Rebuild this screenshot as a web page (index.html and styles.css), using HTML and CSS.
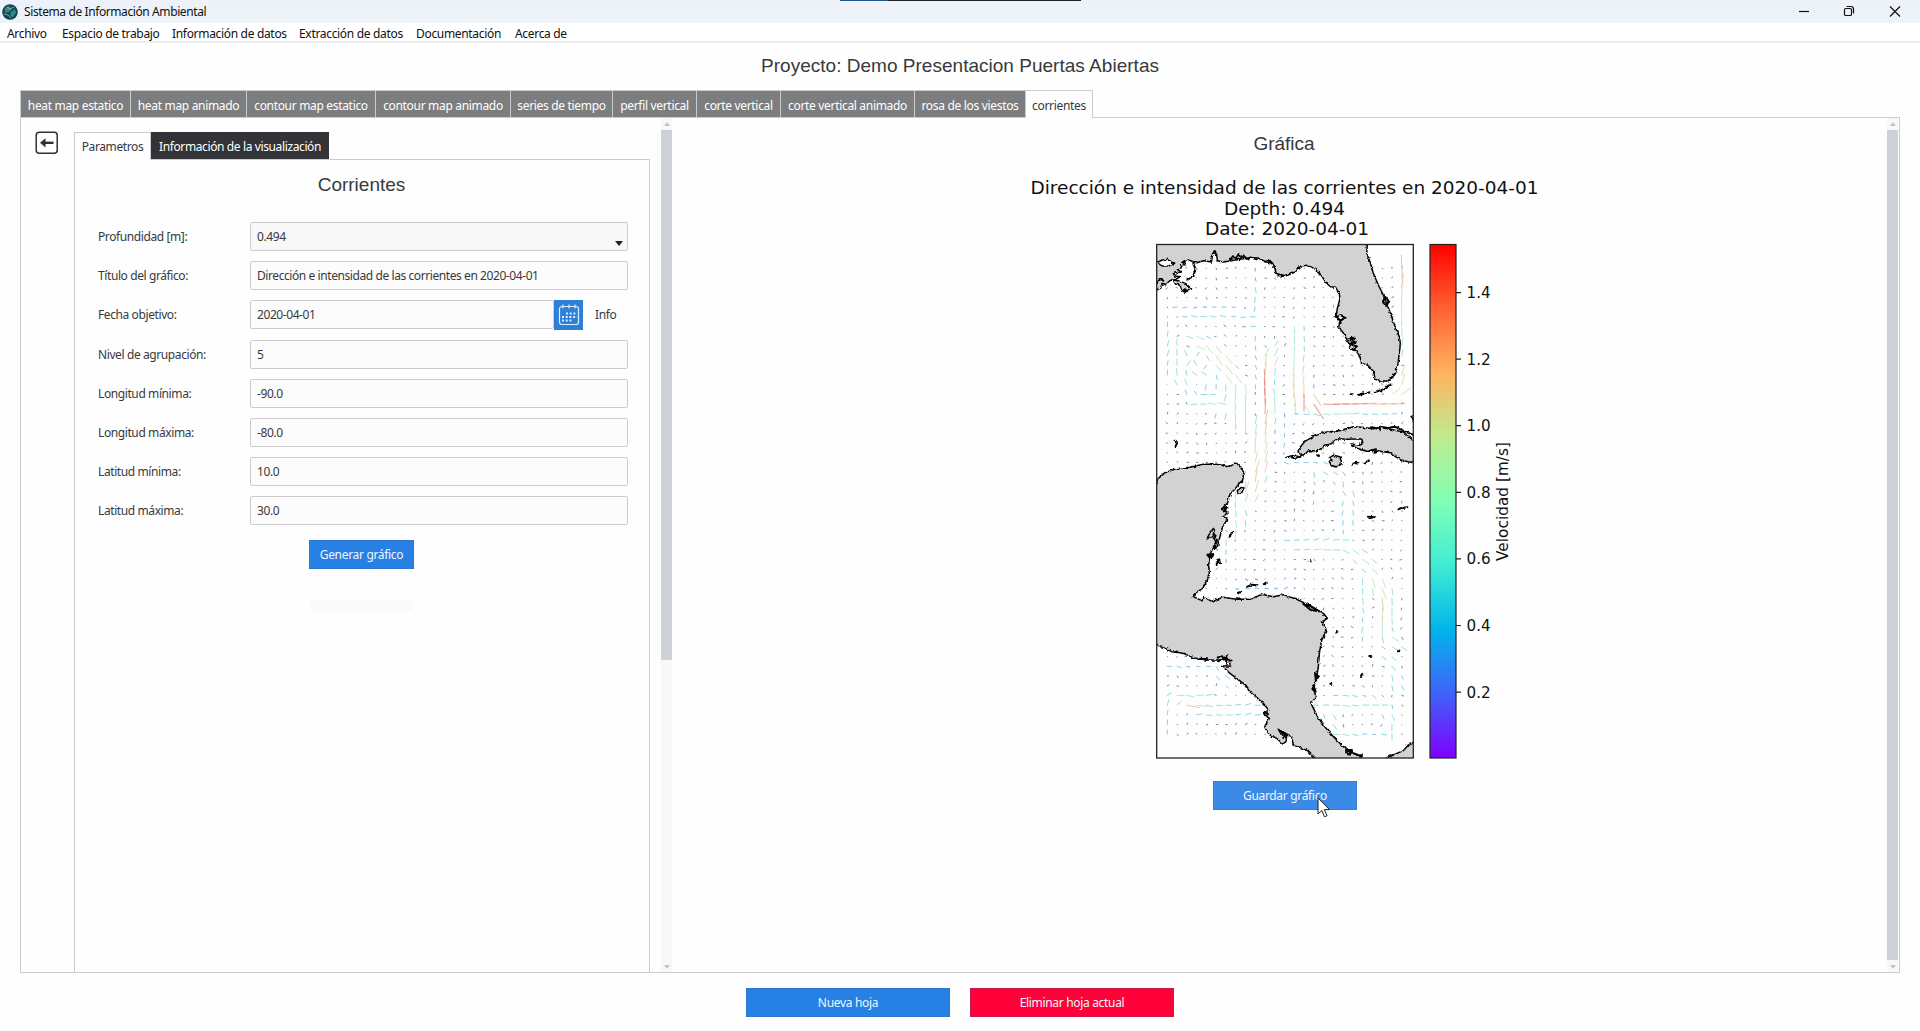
FILE: index.html
```html
<!DOCTYPE html>
<html lang="es">
<head>
<meta charset="utf-8">
<title>Sistema de Información Ambiental</title>
<link rel="stylesheet" href="styles.css">
</head>
<body>
<div class="topstrip"></div>
<header class="titlebar">
  <svg class="logo" width="16" height="16" viewBox="0 0 16 16"><circle cx="8" cy="8" r="7.8" fill="#164450"/><path d="M3 4l4-2 3 3-3 3-4 1zM9 8l4-3 1 4-3 4-3-1z" fill="#2f8a88"/><path d="M2 10l4 1 3 3M5 3l3 2 4-2" stroke="#7ccbc4" fill="none" stroke-width=".8"/></svg>
  <span class="apptitle">Sistema de Información Ambiental</span>
  <svg class="controls" width="120" height="22" viewBox="0 0 120 22" fill="none" stroke="#111" stroke-width="1.2">
    <path d="M9 10.5h10"/>
    <rect x="54.500" y="7.500" width="7" height="7" rx="1.300"/><path d="M56.500 5.500h4.500q2.500 0 2.500 2.500v4.500"/>
    <path d="M100 5.500l10 10m0-10l-10 10"/>
  </svg>
</header>
<nav class="menubar">
  <span class="m1">Archivo</span><span class="m2">Espacio de trabajo</span><span class="m3">Información de datos</span><span class="m4">Extracción de datos</span><span class="m5">Documentación</span><span class="m6">Acerca de</span>
</nav>
<h1 class="project">Proyecto: Demo Presentacion Puertas Abiertas</h1>
<div class="tabs">
  <span class="tab t1">heat map estatico</span><span class="tab t2">heat map animado</span><span class="tab t3">contour map estatico</span><span class="tab t4">contour map animado</span><span class="tab t5">series de tiempo</span><span class="tab t6">perfil vertical</span><span class="tab t7">corte vertical</span><span class="tab t8">corte vertical animado</span><span class="tab t9">rosa de los viestos</span><span class="tab t10 current">corrientes</span>
</div>
<main class="sheet">
  <div class="backcol">
    <svg width="24" height="24" viewBox="0 0 24 24"><rect x="1.200" y="1.200" width="21" height="21" rx="3" fill="#fff" stroke="#303336" stroke-width="1.500"/><path d="M7 11.800h11.500" stroke="#303336" stroke-width="2.400"/><path d="M5 11.800l5.500-4.600v9.200z" fill="#303336"/></svg>
  </div>
  <section class="left">
    <div class="subtabs"><span class="sub1">Parametros</span><span class="sub2">Información de la visualización</span></div>
    <div class="panel">
      <h2 class="heading">Corrientes</h2>
      <div class="form">
        <label>Profundidad [m]:</label><div class="field combo">0.494<i class="caret"></i></div>
        <label>Título del gráfico:</label><div class="field">Dirección e intensidad de las corrientes en 2020-04-01</div>
        <label>Fecha objetivo:</label>
        <div class="daterow"><div class="field date">2020-04-01</div>
          <div class="calbtn"><svg width="22" height="24" viewBox="0 0 22 24" fill="none" stroke="#d8f2ff" stroke-width="1.200"><rect x="1.500" y="3.500" width="19" height="18" rx="2.500"/><path d="M5 1.500v4M11 1.500v4M17 1.500v4"/><path d="M8 10.500h11M4 14h15M4 17.500h11" stroke-width="2" stroke-dasharray="2 1.700"/></svg></div>
          <span class="info">Info</span></div>
        <label>Nivel de agrupación:</label><div class="field">5</div>
        <label>Longitud mínima:</label><div class="field">-90.0</div>
        <label>Longitud máxima:</label><div class="field">-80.0</div>
        <label>Latitud mínima:</label><div class="field">10.0</div>
        <label>Latitud máxima:</label><div class="field">30.0</div>
      </div>
      <div class="btn generate">Generar gráfico</div>
      <div class="ghost"></div>
    </div>
  </section>
  <div class="scroll"><i class="up"></i><div class="thumb short"></div><i class="down"></i></div>
  <section class="right">
    <h2 class="heading gtitle">Gráfica</h2>
    <svg class="figure" width="540" height="600" viewBox="1014 170 540 600">
      <defs>
        <linearGradient id="rainbow" x1="0" y1="1" x2="0" y2="0">
          <stop offset="0" stop-color="#8000ff"/><stop offset=".125" stop-color="#4062fa"/><stop offset=".25" stop-color="#00b5eb"/><stop offset=".375" stop-color="#40ecd4"/><stop offset=".5" stop-color="#80ffb4"/><stop offset=".625" stop-color="#bfec8e"/><stop offset=".75" stop-color="#ffb360"/><stop offset=".875" stop-color="#ff6232"/><stop offset="1" stop-color="#ff0000"/>
        </linearGradient>
        <clipPath id="frame"><rect x="50" y="43" width="770" height="1541"/></clipPath>
        <filter id="rough" x="0" y="0" width="1" height="1"><feTurbulence type="fractalNoise" baseFrequency=".1" numOctaves="2" seed="4"/><feDisplacementMap in="SourceGraphic" scale="10" xChannelSelector="R" yChannelSelector="G"/></filter>
      </defs>
      <g class="figtitle" text-anchor="middle">
        <text x="1284.500" y="194" textLength="508">Dirección e intensidad de las corrientes en 2020-04-01</text>
        <text x="1284.500" y="215" textLength="121">Depth: 0.494</text>
        <text x="1287" y="235" textLength="164">Date: 2020-04-01</text>
      </g>
      <g transform="translate(1140 230) scale(.33333)" clip-path="url(#frame)">
        <g id="arrows" class="arrows"></g>
        <g class="land" filter="url(#rough)">
          <path d="M40 30V180L62 175 66 160 78 164 88 152 100 150 106 162 120 166 126 184 138 178 134 188 152 174 136 160 114 152 102 150 122 140 104 138 100 130 124 126 112 118 126 112 122 104 138 104 128 98 145 90 170 98 190 92 215 96 217 76 223 62 230 74 232 92 250 96 275 92 300 88 330 83 355 84 375 94 395 100 405 112 408 130 430 137 445 134 465 126 483 108 500 106 520 114 535 124 548 142 558 158 572 170 587 172 598 190 600 205 592 235 588 262 600 255 614 263 600 275 596 290 612 312 625 338 632 358 648 362 660 380 664 400 684 406 700 424 706 448 722 453 745 452 758 440 768 425 774 400 778 370 781 340 778 320 768 298 755 260 742 225 730 195 715 165 700 130 690 95 680 70 683 30Z"/>
          <path d="M830 640L790 606 750 598 720 592 700 596 665 592 640 590 610 600 580 604 550 608 520 620 495 634 478 655 474 665 486 678 470 684 440 682 462 674 480 682 492 676 505 662 535 662 550 650 575 640 592 626 625 628 665 626 668 638 655 645 632 642 650 655 680 664 720 664 750 668 770 682 790 692 830 700"/>
          <path d="M40 780L55 745 75 728 110 716 150 712 190 703 230 703 265 710 290 700 300 710 312 728 308 750 296 762 286 776 270 792 263 818 244 838 264 846 250 860 262 868 248 890 240 920 232 950 223 955 232 930 223 915 200 927 218 894 224 900 218 920 228 935 216 960 210 974 206 1005 208 1030 200 1055 188 1075 165 1090 160 1100 185 1112 190 1100 215 1114 250 1102 290 1108 330 1108 365 1093 400 1100 430 1094 470 1108 500 1122 530 1140 550 1150 562 1165 548 1175 560 1205 545 1230 538 1270 535 1310 530 1340 520 1380 528 1400 513 1420 530 1455 550 1485 580 1520 610 1550 630 1565 660 1580 680 1600H540L500 1560 460 1545 455 1520 440 1512 415 1498 422 1510 440 1520 438 1535 428 1542 410 1525 385 1512 374 1490 388 1465 370 1450 386 1440 370 1420 330 1385 310 1360 270 1330 246 1308 272 1308 265 1288 235 1290 200 1290 165 1285 130 1270 95 1265 40 1238Z"/>
          <path d="M725 1590L760 1575 790 1562 805 1545 830 1532V1600Z"/>
          <path d="M568 684L580 676 600 680 604 698 592 711 574 707 568 694 576 690ZM292 782L304 772 312 774 304 790 294 794Z"/>
          <path class="lake" d="M52 98L66 90 82 88 95 97 104 100 86 108 66 108Z"/>
          <path class="isle" d="M160 98L166 118 160 138 142 150M48 160L60 148 70 152M270 90l10-12 8 8 8-14 6 10 8-6 12 12 10-6 18 6M375 95l15-3 15 18M415 136l20 2 30-14M592 262l8 10 14-8-8-8M625 325l20-2-12 8 14 6-18 4 22 10-10 8M735 200l-6 16 10 12 6-16zM656 495l20-6 16-2M704 486l22-6 24-16M632 493l6 0M766 430l-16 20M104 632l7 8-4 8M720 590l24 4 20-4 30 14 24 10M696 592l24 6M814 560l8 12M636 704l16-6M674 698l12-7M690 662l18-4-4 10 14-4M532 676l5 2M246 836l16-6-10 14M202 974l12 8 8-10zM268 920l9-14M230 1002l8-14 2 14M294 1088l8-2M322 1070l14-6 14 2M370 1064l8-6M774 838l10-4M790 834l12-2M684 860l22 2-18 2M509 994l3 0M490 1122l22 6 26 16-26-4zM545 1174l8 4M233 1284l12-8 5 10 14-10-4 12 12 4M234 1294l22-8 4 14M175 1286l28 2M588 1208l4-3M688 1278h5M663 1338l3-6M571 1361h3M525 1330l12 10-10 8zM519 1365l8 20-10-8M618 1560l18 0-10 16zM642 1570l20 8 6-4M778 1262l-1 2M426 1506l12 10-8 8M372 1448l12 4"/>
        </g>
      </g>
      <rect x="1156.700" y="244.500" width="256.600" height="513.500" fill="none" stroke="#222" stroke-width="1.300"/>
      <rect x="1430" y="244.500" width="26" height="513.500" fill="url(#rainbow)" stroke="#222" stroke-width="1.200"/>
      <path d="M1456 292.600h5M1456 359.200h5M1456 425.700h5M1456 492.300h5M1456 558.900h5M1456 625.500h5M1456 692.100h5" stroke="#222" stroke-width="1.200"/>
      <g class="ticks">
        <text x="1466.500" y="298">1.4</text><text x="1466.500" y="364.500">1.2</text><text x="1466.500" y="431">1.0</text><text x="1466.500" y="497.500">0.8</text><text x="1466.500" y="564">0.6</text><text x="1466.500" y="631">0.4</text><text x="1466.500" y="697.500">0.2</text>
        <text transform="translate(1508 501.500) rotate(-90)" text-anchor="middle" textLength="119">Velocidad [m/s]</text>
      </g>
    </svg>
    <div class="btn save">Guardar gráfico
      <svg class="cursor" width="14" height="22" viewBox="0 0 14 22"><path d="M1 1v16l3.800-3.500 2.700 6.300 2.600-1.100-2.700-6.100H12.500z" fill="#fff" stroke="#222" stroke-width="1"/></svg>
    </div>
  </section>
  <div class="scroll"><i class="up"></i><div class="thumb long"></div><i class="down"></i></div>
</main>
<footer class="actions"><div class="btn wide">Nueva hoja</div><div class="btn wide danger">Eliminar hoja actual</div></footer>
<script src="currents.js"></script>
</body>
</html>
```
FILE: styles.css
```css
* { box-sizing: border-box; }
body { margin: 0; width: 1920px; height: 1031px; overflow: hidden; background: #fefefe; color: #373a3c; font: 12px/16px "Noto Sans", "Open Sans", sans-serif; letter-spacing: -0.32px; display: flex; flex-direction: column; position: relative; }
.topstrip { position: absolute; left: 840px; top: 0; width: 241px; height: 1px; background: linear-gradient(90deg, #22568c 48px, #1c2028 48px); }
.titlebar { height: 23px; background: linear-gradient(#edf2fb, #eef3f7); display: flex; align-items: center; padding-left: 2px; color: #111; flex: none; }
.logo { margin-right: 6px; }
.apptitle { flex: 1; letter-spacing: -0.4px; padding-top: 1px; }
.controls { margin-right: 10px; }
.menubar { height: 20px; border-bottom: 2px solid #ededed; background: #fff; color: #111; display: flex; padding-left: 7px; line-height: 21px; flex: none; white-space: nowrap; }
.m1 { width: 55px; } .m2 { width: 110px; } .m3 { width: 127px; } .m4 { width: 117px; } .m5 { width: 99px; }
.project { margin: 0; height: 47px; line-height: 46px; text-align: center; font-weight: 400; font-size: 19px; font-family: "Liberation Sans", sans-serif; letter-spacing: 0.02px; flex: none; }
.tabs { display: flex; height: 27px; margin-left: 20px; flex: none; position: relative; z-index: 1; }
.tab { background: #7c7d7f; color: #fff; border: 1px solid #ccc; border-width: 1px 1px 0 0; line-height: 29px; text-align: center; white-space: nowrap; }
.tab:first-child { border-left-width: 1px; }
.t1 { width: 111px; } .t2 { width: 116px; } .t3 { width: 129px; } .t4 { width: 135px; } .t5 { width: 102px; } .t6 { width: 84px; } .t7 { width: 84px; } .t8 { width: 134px; } .t9 { width: 111px; } .t10 { width: 67px; }
.current { background: #fefefe; color: #373a3c; height: 28px; }
.sheet { height: 856px; margin: 0 20px; border: 1px solid #ccc; display: flex; flex: none; }
.backcol { width: 53px; padding: 13px 0 0 14px; }
.left { width: 576px; padding-top: 14px; display: flex; flex-direction: column; }
.subtabs { display: flex; height: 28px; line-height: 29px; position: relative; z-index: 1; white-space: nowrap; text-align: center; }
.sub1 { width: 77px; height: 28px; border: 1px solid #ccc; border-bottom: 0; background: #fefefe; line-height: 28px; letter-spacing: -0.4px; }
.sub2 { width: 178px; height: 27px; background: #323437; color: #fff; line-height: 30px; letter-spacing: -0.38px; }
.panel { border: 1px solid #ccc; border-bottom: 0; margin-top: -1px; flex: 1; padding: 13px 21px 0 23px; display: flex; flex-direction: column; align-items: center; }
.heading { margin: 0 3px 0 0; font-size: 19px; line-height: 24px; font-weight: 400; font-family: "Liberation Sans", sans-serif; letter-spacing: 0; }
.form { margin-top: 25px; align-self: stretch; display: grid; grid-template-columns: 152px 378px; grid-template-rows: 29px 29px 30px 29px 29px 29px 29px 29px; row-gap: 10px; align-items: center; letter-spacing: -0.4px; }
.field { height: 29px; border: 1px solid #ccc; border-radius: 2px; background: #fcfcfc; padding-left: 6px; line-height: 27px; position: relative; letter-spacing: -0.42px; }
.combo { background: #f8f8f8; }
.caret { position: absolute; right: 4px; bottom: 4px; border: 4px solid transparent; border-top: 5px solid #222; border-bottom: 0; }
.daterow { display: flex; align-items: flex-start; height: 30px; }
.date { width: 304px; }
.calbtn { width: 29px; height: 30px; background: #2f7ed8; display: flex; align-items: center; justify-content: center; }
.info { margin: 7px 0 0 12px; }
.btn { background: #2780e3; color: #eef7ff; height: 29px; line-height: 29px; text-align: center; box-shadow: inset 0 0 0 1px rgba(60, 90, 130, .25); }
.generate { width: 105px; margin: 15px 3px 0 0; }
.ghost { width: 101px; height: 12px; margin: 30px 3px 0 0; background: #fafafa; }
.scroll { width: 11px; margin-left: 11px; background: #f8f8f8; display: flex; flex-direction: column; align-items: center; padding: 4px 0 3px; }
.thumb { width: 11px; background: #ced2d8; margin: 4px 0 auto; }
.short { height: 530px; } .long { height: 830px; }
.up { border: 3px solid transparent; border-bottom: 4px solid #c4c4c4; border-top: 0; }
.down { border: 3px solid transparent; border-top: 4px solid #c4c4c4; border-bottom: 0; }
.right { width: 1204px; padding-top: 14px; display: flex; flex-direction: column; align-items: center; padding-left: 20px; }
.gtitle { height: 38px; margin: 0; }
.figure { display: block; }
.figtitle { font: 18.500px "DejaVu Sans", sans-serif; letter-spacing: 0; fill: #111; }
.ticks { font: 15.200px "DejaVu Sans", sans-serif; letter-spacing: 0; fill: #111; }
.land path { fill: #d2d2d2; stroke: #050505; stroke-width: 4.500; stroke-linejoin: round; }
.land .lake { fill: #fff; }
.land .isle { fill: none; stroke-width: 6; stroke-linecap: round; }
.arrows { stroke-linecap: round; opacity: .65; }
.save { width: 144px; margin: 11px 0 0 2px; background: #3a8ae6; position: relative; }
.cursor { position: absolute; left: 104px; top: 16px; }
.actions { display: flex; gap: 20px; justify-content: center; padding-top: 15px; }
.wide { width: 204px; }
.danger { background: #ff0039; }
```
FILE: currents.js
```js
// Each stream: half width of its influence, then points of x, y, speed (m/s).
const streams = [
  [16, [330,795,.9],[352,740,1.1],[372,650,.9],[380,560,1.3],[376,470,1.4],[383,410,.9],[408,350,.5]],
  [14, [348,730,1],[350,600,.8]],
  [14, [468,300,.6],[469,400,.9],[470,500,1.1],[475,530,.8]],
  [14, [494,310,.5],[495,450,.8],[495,485,1.5],[515,520,1.5]],
  [10, [555,527,1.3],[650,524,1.4],[750,516,1.2],[785,490,1],[797,440,1]],
  [13, [787,360,.6],[785,200,.8],[785,170,1.2],[785,70,1.3]],
  [13, [480,552,.4],[600,553,.7],[740,552,.5]],
  [15, [140,320,.7],[200,345,.9],[240,385,1.1],[280,440,.8],[285,560,.7]],
  [15, [85,430,.5],[82,310,.5]],
  [16, [175,355,.4],[215,400,.4],[200,445,.5],[160,430,.4],[145,390,.5],[175,355,.4]],
  [16, [245,400,.5],[252,450,.5],[250,550,.6]],
  [14, [245,522,.6],[165,518,.5],[120,450,.6],[110,360,.5]],
  [14, [225,492,.5],[140,488,.4]],
  [14, [315,470,.7],[318,570,.8]],
  [14, [350,272,.4],[230,260,.6],[140,262,.5]],
  [14, [290,230,.4],[110,232,.4]],
  [13, [347,130,.3],[347,460,.4]],
  [13, [408,380,.4],[405,560,.45]],
  [13, [435,550,.3],[435,640,.3]],
  [14, [290,800,.6],[288,900,.6]],
  [14, [318,770,.6],[318,870,.4]],
  [14, [258,930,.4],[258,980,.2]],
  [15, [430,930,.4],[600,930,.5]],
  [14, [480,958,.5],[620,958,.6],[660,980,.6],[692,1010,.6],[692,1070,.6]],
  [14, [715,1050,.9],[730,1110,1.1],[730,1190,.8],[735,1220,.6],[780,1250,.5]],
  [14, [757,1090,.6],[757,1160,.6]],
  [14, [668,1060,.5],[668,1200,.5]],
  [15, [450,695,.4],[545,698,.4],[590,730,.4],[612,770,.5],[612,880,.5]],
  [13, [638,790,.5],[638,870,.4]],
  [13, [520,730,.4],[520,800,.3]],
  [14, [80,1310,.35],[230,1312,.4],[262,1360,.4]],
  [12, [105,1398,.6],[200,1398,.6]],
  [12, [140,1417,1.2],[200,1430,.7],[270,1432,.5],[350,1425,.35]],
  [14, [170,1457,.6],[270,1458,.6],[350,1455,.35]],
  [15, [78,1510,.4],[82,1430,.5],[110,1400,.5]],
  [14, [540,1425,.4],[600,1425,.6],[720,1425,.6]],
  [14, [580,1395,.4],[680,1395,.4],[730,1430,.5],[753,1460,.5],[753,1510,.5]],
  [15, [570,1450,.4],[590,1510,.5],[640,1520,.5],[720,1510,.4]],
  [14, [730,1270,.5],[760,1310,.5],[770,1370,.4]],
  [14, [310,1070,.3],[430,1075,.3]]
];
const stops = [[128,0,255],[64,98,250],[0,181,235],[64,236,212],[128,255,180],[191,236,142],[255,179,96],[255,98,50],[255,0,0]];
const colour = s => {
  const t = Math.min(7.99, s / 1.54 * 8), i = Math.floor(t), f = t - i;
  return 'rgb(' + stops[i].map((c, k) => Math.round((c + (stops[i + 1][k] - c) * f) * .85)) + ')';
};
let marks = '';
for (let r = 0; r < 49; r++) for (let c = 0; c < 25; c++) {
  const x = 82 + c * 29.3, y = 115 + r * 29.12;
  const a = Math.sin(c * .6 + r * .31) * 2 + Math.cos(r * .5 - c * .2) * 2;
  const base = .1 + .08 * Math.sin(c * 1.3 + r * .9);
  let vx = base * Math.cos(a), vy = base * Math.sin(a), best = 0, bx = 0, by = 0;
  for (const [w, ...p] of streams) for (let i = 0; i + 1 < p.length; i++) {
    const dx = p[i + 1][0] - p[i][0], dy = p[i + 1][1] - p[i][1], l = Math.hypot(dx, dy);
    const t = Math.max(0, Math.min(1, ((x - p[i][0]) * dx + (y - p[i][1]) * dy) / (l * l)));
    const d = Math.hypot(x - p[i][0] - t * dx, y - p[i][1] - t * dy);
    const s = (p[i][2] + (p[i + 1][2] - p[i][2]) * t) * (d < w ? 1 : Math.exp(-((d - w) ** 2) / 120));
    if (s > best) { best = s; bx = dx / l * s; by = dy / l * s; }
  }
  if (best > .1) { vx = vx * .8 + bx; vy = vy * .8 + by; }
  const s = Math.hypot(vx, vy), k = 33;
  marks += `<path d="M${x.toFixed(1)} ${y.toFixed(1)}l${(vx * k).toFixed(1)} ${(vy * k).toFixed(1)}" stroke="${s < .26 ? '#33466c' : colour(s)}" stroke-width="${s < .3 ? 2.9 : 2.2}"/>`;
}
document.getElementById('arrows').innerHTML = marks;
```
